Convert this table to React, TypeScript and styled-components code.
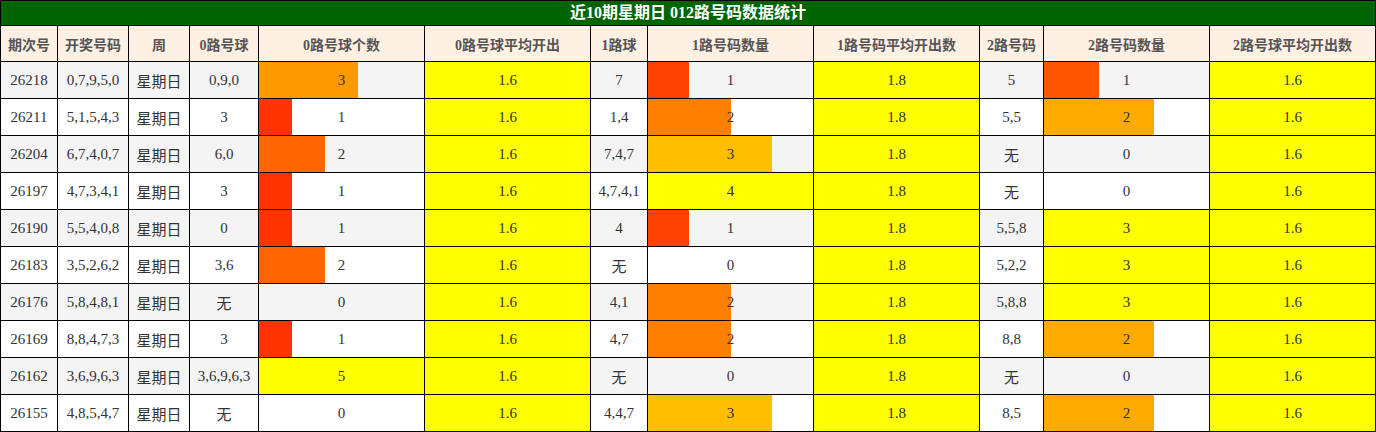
import React from "react";
import styled, { createGlobalStyle } from "styled-components";

const GlobalStyle = createGlobalStyle`
  html, body { margin: 0; padding: 0; background: #fff; }
  body { font-family: "Liberation Serif", "Noto Sans CJK SC", serif; }
`;

const Table = styled.table`
  width: 1376px;
  table-layout: fixed;
  border-collapse: separate;
  border-spacing: 0;
  border-top: 1px solid #000;
  border-left: 1px solid #000;
  font-family: "Liberation Serif", "Noto Sans CJK SC", serif;
`;

const Col = styled.col<{ $w: number }>`
  width: ${(p) => p.$w}px;
`;

const TitleCell = styled.th`
  height: 24px;
  padding: 0;
  background: #006400;
  color: #fff;
  font-size: 16px;
  font-weight: bold;
  text-align: center;
  vertical-align: middle;
  border-right: 1px solid #000;
  border-bottom: 1px solid #000;
  line-height: 24px;
`;

const HeadCell = styled.th`
  height: 35px;
  padding: 0;
  background: #fff0e4;
  color: #555;
  font-size: 14px;
  font-weight: bold;
  text-align: center;
  vertical-align: middle;
  white-space: nowrap;
  border-right: 1px solid #000;
  border-bottom: 1px solid #000;
`;

const Cell = styled.td<{ $bg: string }>`
  height: 36px;
  padding: 0;
  background: ${(p) => p.$bg};
  color: #333;
  font-size: 15px;
  text-align: center;
  vertical-align: middle;
  white-space: nowrap;
  border-right: 1px solid #000;
  border-bottom: 1px solid #000;
`;

const AvgCell = styled(Cell)`
  background: #ffff00;
`;

const BarCell = styled(Cell)<{ $pct: number; $color: string }>`
  background: ${(p) =>
    p.$pct > 0
      ? `linear-gradient(to right, ${p.$color} 0, ${p.$color} ${p.$pct}%, ${p.$bg} ${p.$pct}%, ${p.$bg} 100%)`
      : p.$bg};
`;

type Row = {
  id: string;
  nums: string;
  r0: string;
  c0: number;
  r1: string;
  c1: number;
  r2: string;
  c2: number;
};

const rows: Row[] = [
  { id: "26218", nums: "0,7,9,5,0", r0: "0,9,0", c0: 3, r1: "7", c1: 1, r2: "5", c2: 1 },
  { id: "26211", nums: "5,1,5,4,3", r0: "3", c0: 1, r1: "1,4", c1: 2, r2: "5,5", c2: 2 },
  { id: "26204", nums: "6,7,4,0,7", r0: "6,0", c0: 2, r1: "7,4,7", c1: 3, r2: "无", c2: 0 },
  { id: "26197", nums: "4,7,3,4,1", r0: "3", c0: 1, r1: "4,7,4,1", c1: 4, r2: "无", c2: 0 },
  { id: "26190", nums: "5,5,4,0,8", r0: "0", c0: 1, r1: "4", c1: 1, r2: "5,5,8", c2: 3 },
  { id: "26183", nums: "3,5,2,6,2", r0: "3,6", c0: 2, r1: "无", c1: 0, r2: "5,2,2", c2: 3 },
  { id: "26176", nums: "5,8,4,8,1", r0: "无", c0: 0, r1: "4,1", c1: 2, r2: "5,8,8", c2: 3 },
  { id: "26169", nums: "8,8,4,7,3", r0: "3", c0: 1, r1: "4,7", c1: 2, r2: "8,8", c2: 2 },
  { id: "26162", nums: "3,6,9,6,3", r0: "3,6,9,6,3", c0: 5, r1: "无", c1: 0, r2: "无", c2: 0 },
  { id: "26155", nums: "4,8,5,4,7", r0: "无", c0: 0, r1: "4,4,7", c1: 3, r2: "8,5", c2: 2 },
];

const widths = [57, 71, 61, 69, 166, 166, 57, 166, 166, 64, 166, 166];
const headers = [
  "期次号",
  "开奖号码",
  "周",
  "0路号球",
  "0路号球个数",
  "0路号球平均开出",
  "1路球",
  "1路号码数量",
  "1路号码平均开出数",
  "2路号码",
  "2路号码数量",
  "2路号球平均开出数",
];

const max0 = Math.max(...rows.map((r) => r.c0));
const max1 = Math.max(...rows.map((r) => r.c1));
const max2 = Math.max(...rows.map((r) => r.c2));

function barColor(ratio: number) {
  const g = Math.round(255 * ratio);
  return `rgb(255, ${g}, 0)`;
}

function Bar({ value, max, bg }: { value: number; max: number; bg: string }) {
  const ratio = max > 0 ? value / max : 0;
  return (
    <BarCell $bg={bg} $pct={ratio * 100} $color={barColor(ratio)}>
      {value}
    </BarCell>
  );
}

export default function App() {
  return (
    <>
      <GlobalStyle />
      <Table>
        <colgroup>
          {widths.map((w, i) => (
            <Col key={i} $w={w} />
          ))}
        </colgroup>
        <thead>
          <tr>
            <TitleCell colSpan={12}>近10期星期日 012路号码数据统计</TitleCell>
          </tr>
          <tr>
            {headers.map((h) => (
              <HeadCell key={h}>{h}</HeadCell>
            ))}
          </tr>
        </thead>
        <tbody>
          {rows.map((r, i) => {
            const bg = i % 2 === 0 ? "#f4f4f4" : "#ffffff";
            return (
              <tr key={r.id}>
                <Cell $bg={bg}>{r.id}</Cell>
                <Cell $bg={bg}>{r.nums}</Cell>
                <Cell $bg={bg}>星期日</Cell>
                <Cell $bg={bg}>{r.r0}</Cell>
                <Bar value={r.c0} max={max0} bg={bg} />
                <AvgCell $bg={bg}>1.6</AvgCell>
                <Cell $bg={bg}>{r.r1}</Cell>
                <Bar value={r.c1} max={max1} bg={bg} />
                <AvgCell $bg={bg}>1.8</AvgCell>
                <Cell $bg={bg}>{r.r2}</Cell>
                <Bar value={r.c2} max={max2} bg={bg} />
                <AvgCell $bg={bg}>1.6</AvgCell>
              </tr>
            );
          })}
        </tbody>
      </Table>
    </>
  );
}
